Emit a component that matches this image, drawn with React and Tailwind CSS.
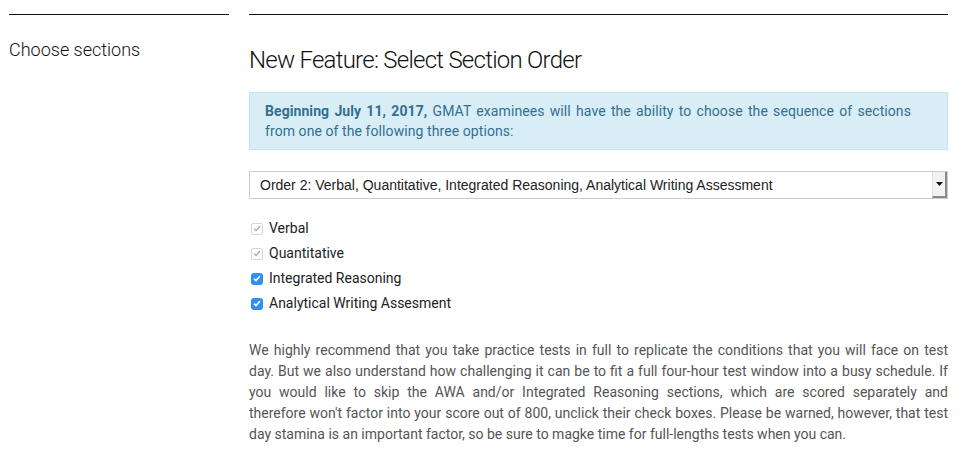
export default function App() {
  const items = [
    { label: "Verbal", disabled: true },
    { label: "Quantitative", disabled: true },
    { label: "Integrated Reasoning", disabled: false },
    { label: "Analytical Writing Assesment", disabled: false },
  ];
  const lines = [
    "We highly recommend that you take practice tests in full to replicate the conditions that you will face on test",
    "day. But we also understand how challenging it can be to fit a full four-hour test window into a busy schedule. If",
    "you would like to skip the AWA and/or Integrated Reasoning sections, which are scored separately and",
    "therefore won't factor into your score out of 800, unclick their check boxes. Please be warned, however, that test",
  ];
  return (
    <div className="w-[965px] h-[473px] bg-white flex gap-[20px] pl-[9px] pr-[17px] pt-[14px] font-['Roboto',sans-serif]">
      <div className="w-[220px] border-t border-[#111]">
        <div className="mt-[22px] text-[18px] leading-[26px] font-light text-[#111]">Choose sections</div>
      </div>
      <div className="flex-1 border-t border-[#111]">
        <h2 className="mt-[30px] text-[24px] leading-[30px] font-light text-[#111] tracking-[-0.75px]">New Feature: Select Section Order</h2>
        <div className="mt-[17px] bg-[#d9edf7] border border-[#bce8f1] text-[#31708f] text-[14px] leading-[20px] pl-[15px] pr-[36px] py-[8px] text-justify tracking-[0.08px]">
          <b className="font-bold">Beginning July 11, 2017,</b> GMAT examinees will have the ability to choose the sequence of sections from one of the following three options:
        </div>
        <div className="mt-[21px] h-[28px] border border-[#ccc] flex items-stretch font-['Liberation_Sans',Arial,sans-serif] text-[14px] text-[#222]">
          <div className="flex-1 flex items-center pl-[10px]">Order 2: Verbal, Quantitative, Integrated Reasoning, Analytical Writing Assessment</div>
          <div className="w-[15px] flex items-center justify-center bg-[#f2f2f2] border-r-2 border-b-2 border-[#8a8a8a] border-l border-l-[#e0e0e0]">
            <svg width="7" height="4" viewBox="0 0 7 4"><path d="M0 0h7L3.5 4z" fill="#111" /></svg>
          </div>
        </div>
        <div className="mt-[17px] flex flex-col">
          {items.map((it) => (
            <label key={it.label} className="h-[25px] flex items-center gap-[6px] text-[14px] text-[#222]">
              {it.disabled ? (
                <span className="ml-[2px] w-[12px] h-[12px] rounded-[2px] border border-[#d6d6d6] bg-white flex items-center justify-center">
                  <svg width="8" height="7" viewBox="0 0 8 7"><path d="M1 3.6l2 2L7 1" stroke="#a8a8a8" strokeWidth="1.3" fill="none" /></svg>
                </span>
              ) : (
                <span className="ml-[2px] w-[12px] h-[12px] rounded-[3px] bg-[#2f8ff3] flex items-center justify-center">
                  <svg width="8" height="7" viewBox="0 0 8 7"><path d="M1 3.6l2 2L7 1" stroke="#fff" strokeWidth="1.5" fill="none" /></svg>
                </span>
              )}
              <span>{it.label}</span>
            </label>
          ))}
        </div>
        <p className="mt-[24px] text-[14px] leading-[21px] text-[#555]">
          {lines.map((l) => (
            <span key={l} className="block whitespace-nowrap text-justify [text-align-last:justify]">{l} </span>
          ))}
          <span className="block">day stamina is an important factor, so be sure to magke time for full-lengths tests when you can.</span>
        </p>
      </div>
    </div>
  );
}
